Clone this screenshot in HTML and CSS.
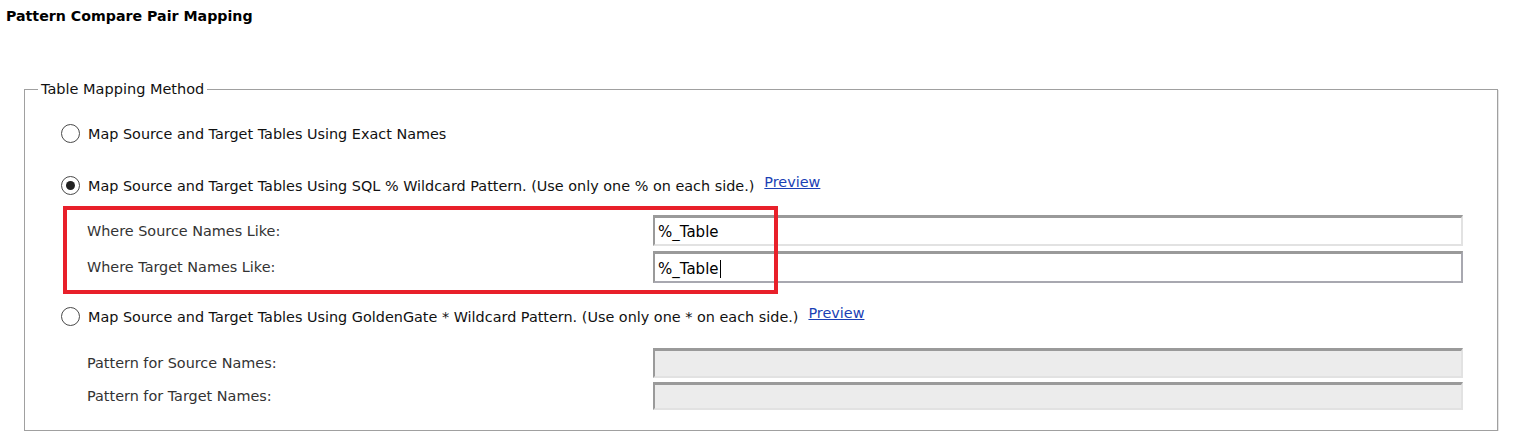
FILE: index.html
```html
<!DOCTYPE html>
<html lang="en">
<head>
<meta charset="utf-8">
<title>Pattern Compare Pair Mapping</title>
<link rel="stylesheet" href="styles.css">
</head>
<body>
<h1 class="page-title">Pattern Compare Pair Mapping</h1>
<fieldset class="method">
  <legend class="method-legend">Table Mapping Method</legend>

  <label class="option option-first">
    <span class="radio"></span>
    <span class="option-text">Map Source and Target Tables Using Exact Names</span>
  </label>

  <div class="option option-second">
    <span class="radio radio-checked"></span>
    <span class="option-text">Map Source and Target Tables Using SQL % Wildcard Pattern. (Use only one % on each side.)</span>
    <a class="preview" href="#">Preview</a>
  </div>

  <div class="fields fields-sql">
    <div class="field">
      <span class="field-label">Where Source Names Like:</span>
      <input class="text-input" type="text" value="%_Table">
    </div>
    <div class="field">
      <span class="field-label">Where Target Names Like:</span>
      <span class="text-input caret-input">%_Table<span class="caret"></span></span>
    </div>
    <div class="highlight"></div>
  </div>

  <div class="option option-third">
    <span class="radio"></span>
    <span class="option-text">Map Source and Target Tables Using GoldenGate * Wildcard Pattern. (Use only one * on each side.)</span>
    <a class="preview" href="#">Preview</a>
  </div>

  <div class="fields fields-gg">
    <div class="field field-gg1">
      <span class="field-label">Pattern for Source Names:</span>
      <input class="text-input text-input-disabled" type="text" disabled>
    </div>
    <div class="field field-gg2">
      <span class="field-label">Pattern for Target Names:</span>
      <input class="text-input text-input-disabled" type="text" disabled>
    </div>
  </div>
</fieldset>
</body>
</html>
```

FILE: styles.css
```css
html, body {
  margin: 0;
  padding: 0;
  background: #ffffff;
}

body {
  font-family: "DejaVu Sans", sans-serif;
  font-size: 14.4px;
  color: #111;
}

.page-title {
  margin: 0;
  padding: 8px 0 0 6px;
  height: 17px;
  line-height: 17px;
  font-size: 14.2px;
  font-weight: bold;
  color: #000;
}

.method {
  margin: 55px 0 0 24px;
  width: 1474px;
  box-sizing: border-box;
  padding: 0 0 20px 0;
  border: 1px solid #a0a0a0;
  box-shadow: 1px 1px 0 #e4e4e4;
  min-width: 0;
}

.method-legend {
  margin-left: 13px;
  padding: 0 3px;
  height: 18px;
  line-height: 18px;
  font-size: 14.5px;
  color: #111;
}

.option {
  display: flex;
  align-items: center;
  height: 24px;
  padding-left: 36px;
  color: #111;
}

.option-first { margin-top: 23px; }
.option-second { margin-top: 28px; }
.option-third { margin-top: 21px; }

.radio {
  box-sizing: border-box;
  width: 19px;
  height: 19px;
  border: 1px solid #4a4a4a;
  border-radius: 50%;
  background: #fff;
  display: flex;
  align-items: center;
  justify-content: center;
  flex: none;
}

.radio-checked::after {
  content: "";
  width: 9px;
  height: 9px;
  border-radius: 50%;
  background: #222;
}

.option-text {
  margin-left: 8px;
  position: relative;
  top: 1px;
}

.preview {
  margin-left: 10px;
  color: #1a3fb5;
  text-decoration: underline;
  position: relative;
  top: -3px;
}

.fields {
  display: flex;
  flex-direction: column;
  gap: 5px;
  padding-left: 62px;
  padding-right: 34px;
}

.fields-sql {
  position: relative;
  margin-top: 18px;
}

.fields-gg {
  margin-top: 20px;
  gap: 4px;
}

.field {
  display: grid;
  grid-template-columns: 566px 1fr;
  align-items: center;
}

.field-label {
  color: #333;
}

.text-input {
  box-sizing: border-box;
  height: 31px;
  width: 810px;
  margin: 0;
  padding: 2px 4px 0 3px;
  border-style: solid;
  border-width: 3px 2px 2px 2px;
  border-color: #9a9a9a #e2e2e2 #e2e2e2 #9a9a9a;
  background: #fff;
  font-family: "DejaVu Sans", sans-serif;
  font-size: 15px;
  color: #000;
  outline: none;
}

.caret-input {
  display: flex;
  align-items: center;
  border-color: #9a9a9a #a8a8b0 #a8a8b0 #9a9a9a;
  height: 32px;
}

.caret {
  display: inline-block;
  width: 1px;
  height: 18px;
  background: #000;
  margin-left: 1px;
}

.text-input-disabled {
  background: #ececec;
  height: 30px;
}

.field-gg2 .text-input-disabled {
  height: 28px;
}

.highlight {
  position: absolute;
  left: 38px;
  top: -9px;
  width: 715px;
  height: 88px;
  box-sizing: border-box;
  border: 4px solid #e8202a;
  pointer-events: none;
}
```
